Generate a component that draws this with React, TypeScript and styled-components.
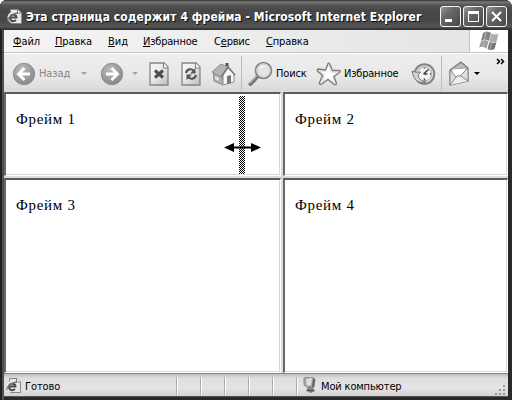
import React from "react";
import styled, { createGlobalStyle } from "styled-components";

const Global = createGlobalStyle`
  * { box-sizing: border-box; }
  body { margin: 0; background: #fff; overflow: hidden; }
`;

const Window = styled.div`
  width: 512px;
  height: 400px;
  display: flex;
  flex-direction: column;
  padding: 0 4px 4px;
  background: #292929;
  border-radius: 7px 7px 0 0;
  overflow: hidden;
  font-family: "DejaVu Sans Condensed", "DejaVu Sans", sans-serif;
  font-stretch: condensed;
  font-size: 11px;
  color: #000;
  box-shadow: inset 2px 0 #202020, inset 4px 0 #505050;
`;

const TitleBar = styled.header`
  height: 30px;
  flex: none;
  margin: 0 -4px;
  padding: 3px 5px 0 7px;
  display: flex;
  align-items: center;
  background: linear-gradient(#333 0, #777 2px, #555 5px, #484848 10px, #464646 20px, #555 27px, #333 29px);
`;

const Title = styled.h1<{ $spacing: number }>`
  margin: 0 0 0 4px;
  flex: 1;
  font-size: 12px;
  line-height: 20px;
  font-weight: 700;
  color: #fff;
  text-shadow: 1px 1px #111;
  white-space: nowrap;
  letter-spacing: ${(p) => p.$spacing}px;
`;

const WindowButtons = styled.div`
  display: flex;
  gap: 2px;
`;

const WindowButton = styled.button`
  width: 21px;
  height: 21px;
  padding: 0;
  border: 1px solid #f4f4f4;
  border-radius: 3px;
  background: linear-gradient(135deg, #999, #686868 35%, #484848);
  svg { display: block; }
`;

const MenuBar = styled.nav`
  height: 23px;
  flex: none;
  display: flex;
  background: linear-gradient(90deg, #f4f4f4, #e4e4e4);
  border-bottom: 1px solid #c4c4c4;
  padding-left: 9px;
`;

const MenuItem = styled.span<{ $width: number; $spacing?: number }>`
  width: ${(p) => p.$width}px;
  line-height: 23px;
  white-space: nowrap;
  letter-spacing: ${(p) => p.$spacing ?? 0}px;
  u { text-underline-offset: 1px; text-decoration-skip-ink: none; }
`;

const Brand = styled.div`
  width: 39px;
  height: 22px;
  margin-left: auto;
  background: #fff;
  border-left: 1px solid #c4c4c4;
`;

const Toolbar = styled.div`
  height: 39px;
  flex: none;
  display: flex;
  align-items: center;
  padding: 1px 3px 0 8px;
  border-top: 1px solid #fff;
  background: linear-gradient(#eee, #e8e8e8 60%, #d8d8d8);
`;

const Tool = styled.div<{ $width: number; $gap?: number; $muted?: boolean }>`
  width: ${(p) => p.$width}px;
  flex: none;
  display: flex;
  align-items: center;
  gap: ${(p) => p.$gap ?? 0}px;
  white-space: nowrap;
  color: ${(p) => (p.$muted ? "#858585" : "#000")};
  svg { flex: none; }
`;

const ToolLabel = styled.span<{ $width: number; $spacing?: number }>`
  width: ${(p) => p.$width}px;
  letter-spacing: ${(p) => p.$spacing ?? 0}px;
`;

const Caret = styled.i<{ $strong?: boolean }>`
  border: 3px solid transparent;
  border-bottom: 0;
  border-top-color: ${(p) => (p.$strong ? "#000" : "#a4a4a4")};
`;

const Separator = styled.i`
  width: 1px;
  height: 35px;
  flex: none;
  margin-right: 6px;
  background: #bdbdbd;
`;

const Overflow = styled.div`
  margin-left: auto;
  align-self: flex-start;
  padding-top: 3px;
  svg { display: block; }
`;

const Frameset = styled.main`
  height: 282px;
  flex: none;
  display: grid;
  grid-template-columns: 277px 227px;
  grid-template-rows: 85px 197px;
  margin-top: -1px;
  background: #dcdcdc;
`;

const Frame = styled.section<{ $right?: boolean; $bottom?: boolean }>`
  position: relative;
  margin: ${(p) => (p.$bottom ? 2 : 1)}px 0 0 ${(p) => (p.$right ? 2 : 0)}px;
  border-style: solid;
  border-width: 2px 1px 1px 2px;
  border-color: #5a5a5a #fff #fff #666;
  background: #fff;
  box-shadow: inset -1px -1px #d8d8d8;
  padding: 14px 0 0 10px;
  font: 15px/23px "Liberation Serif", serif;
`;

const FrameText = styled.p`
  margin: 0;
  letter-spacing: 0.7px;
`;

const DragGuide = styled.div`
  position: absolute;
  left: 233px;
  top: 2px;
  width: 6px;
  height: 78px;
  background: repeating-conic-gradient(#000 0 25%, #fff 0 50%) 0 0 / 2px 2px;
`;

const ResizeCursor = styled.svg`
  position: absolute;
  left: 218px;
  top: 48px;
`;

const StatusBar = styled.footer`
  height: 23px;
  flex: none;
  display: flex;
  align-items: center;
  padding: 1px 0 0 2px;
  border-top: 1px solid #888;
  background: linear-gradient(#bbb, #dedede 4px, #e4e4e4 14px, #d2d2d2);
  box-shadow: 0 1px #555;
`;

const StatusText = styled.span<{ $width: number; $spacing?: number }>`
  width: ${(p) => p.$width}px;
  margin-left: 4px;
  padding-top: 2px;
  white-space: nowrap;
  letter-spacing: ${(p) => p.$spacing ?? 0}px;
`;

const StatusPane = styled.i<{ $narrow?: boolean }>`
  width: ${(p) => (p.$narrow ? 7 : 24)}px;
  height: 18px;
  flex: none;
  border-left: 1px solid #aaa;
  box-shadow: inset 1px 0 #fff;
`;

const Grip = styled.svg`
  margin: auto 2px 0 auto;
  flex: none;
`;

const PageIcon = () => (
  <svg width="15" height="16" viewBox="0 0 15 16">
    <path d="M3.500 1.500V.5h7l4 3.500v10.500h-10z" fill="#e9e9e9" stroke="#858585" />
    <path d="M10.500.5v3.500h4" fill="#fff" stroke="#777" />
    <circle cx="6" cy="8.500" r="5.500" fill="#eee" />
    <path d="M9 11c-2 2-6 1.500-6-2.200C3 5 9.500 4.500 9.500 8.500H4" fill="none" stroke="#4c4c4c" strokeWidth="2" />
    <path d="M1 12C0 9 6 4 11 4" fill="none" stroke="#777" strokeWidth="1.300" />
  </svg>
);

const ArrowIcon = ({ flip }: { flip?: boolean }) => (
  <svg width="24" height="24" viewBox="0 0 24 24">
    <defs>
      <radialGradient id="disc" cx=".4" cy=".3" r=".75">
        <stop stopColor="#bcbcbc" /><stop offset="1" stopColor="#858585" />
      </radialGradient>
    </defs>
    <circle cx="12" cy="12" r="10.700" fill="url(#disc)" stroke="#8d8d8d" />
    <path transform={flip ? "translate(24 0) scale(-1 1)" : undefined}
      d="M12.500 6 6.500 12l6 6M7 12h11" fill="none" stroke="#fff" strokeWidth="2.900" />
  </svg>
);

const SheetIcon = ({ refresh }: { refresh?: boolean }) => (
  <svg width="20" height="24" viewBox="0 0 20 24">
    <defs>
      <linearGradient id="sheet" x2="1" y2="1">
        <stop stopColor="#f8f8f8" /><stop offset=".5" stopColor="#e8e8e8" /><stop offset="1" stopColor="#bbb" />
      </linearGradient>
    </defs>
    <path d="M1 1h14l4 4v18H1z" fill="url(#sheet)" stroke="#858585" strokeWidth="1.300" />
    <path d="M14.500 1v5H19" fill="#fff" stroke="#777" />
    {refresh ? (
      <g fill="none" stroke="#555" strokeWidth="2.200">
        <path d="M5 11c1-4 5-5 8-2M15 13c-1 4-5 5-8 2" />
        <path d="M14.500 6v5.500H9zM5.500 18v-5.500H11z" fill="#555" stroke="none" />
      </g>
    ) : <path d="m6 8.500 8 7m0-7-8 7" stroke="#4c4c4c" strokeWidth="3" />}
  </svg>
);

const HomeIcon = () => (
  <svg width="25" height="26" viewBox="0 0 25 26">
    <path d="M14.500 2h3v8h-3z" fill="#555" />
    <path d="M2.500 12 10 7l3 16-1 1-9-4z" fill="#adadad" stroke="#888" />
    <path d="m12 14 5-7 6 6v8l-11 3z" fill="#f7f7f7" stroke="#888" />
    <path d="m1 11 9-8 7 3-7 10z" fill="#b5b5b5" stroke="#8d8d8d" />
    <path d="m10 16 7-10 7 8" fill="none" stroke="#777" strokeWidth="1.500" />
    <path d="m16 15 4-1v8l-4 1z" fill="#777" />
    <path d="m4 15 4 2v3l-4-2z" fill="#e4e4e4" />
  </svg>
);

const SearchIcon = () => (
  <svg width="25" height="26" viewBox="0 0 25 26">
    <path d="m2.500 23 7.500-8" stroke="#737373" strokeWidth="4" strokeLinecap="round" />
    <path d="m2 22 7-8" stroke="#bbb" strokeWidth="1.500" />
    <circle cx="15.500" cy="9.500" r="8" fill="#ededed" stroke="#808080" strokeWidth="1.600" />
    <circle cx="15.500" cy="9.500" r="6.300" fill="#e4e4e4" stroke="#ccc" />
    <path d="M11 9c1-4 4-5 7-4-4 1-5 2-7 4z" fill="#fff" />
  </svg>
);

const StarIcon = () => (
  <svg width="26" height="26" viewBox="0 0 26 26">
    <path d="M12 2.500q1-1 1.700.5l2.800 6.500h7q1.500.5 0 2L18 15.500l2.500 7q-.5 2-2.500 1l-6-5-7 5q-2 0-1.500-2l3-7L1.500 10q-1-1.500 1-2l7 1z" fill="#e4e4e4" stroke="#7c7c7c" strokeWidth="1.300" strokeLinejoin="round" />
    <path d="m12.500 5 1.500 6.500 6 .5-4.500 3.500 2 5-5.500-4-4 3 1-6-4-3 5 .5z" fill="#fff" />
  </svg>
);

const HistoryIcon = () => (
  <svg width="25" height="24" viewBox="0 0 25 24">
    <circle cx="13.500" cy="12" r="9.800" fill="#ddd" stroke="#858585" strokeWidth="2" />
    <circle cx="13.500" cy="12" r="7" fill="#f4f4f4" stroke="#aaa" />
    <path d="m12.500 12 5-4.500m-5 4.500h4M13.500 5.500v1m0 10v2M20 12h-1" stroke="#444" strokeWidth="1.600" />
    <path d="M1 9c4 2 7 1 9 1l-3 3c1 4 3 6 8 7-7 2-12-1-14-11z" fill="#d4d4d4" stroke="#777" />
  </svg>
);

const MailIcon = () => (
  <svg width="22" height="25" viewBox="0 0 22 25">
    <path d="m2 9 11-8 7 6v13L2 24z" fill="#bbb" stroke="#777" strokeWidth="1.200" />
    <path d="m4 8 14-1v10L4 18z" fill="#fff" stroke="#aaa" />
    <path d="m2 9 6 7 4-1 8-8v13L2 24z" fill="#dedede" stroke="#888" />
    <path d="m2 24 7-9 4 0 7 5" fill="#eee" stroke="#858585" />
  </svg>
);

const FlagIcon = () => (
  <svg width="38" height="22" viewBox="0 0 38 22">
    <path d="M13 3q4-3 8 0l-2 8q-4-3-8 0z" fill="#858585" />
    <path d="M21.500 3.500q3.500 2 7 0l-2 8q-3.500 2-7 0z" fill="#aaa" />
    <path d="M11 11.500q4-3 7.500 0l-2 7q-4-3-7.500-1z" fill="#a0a0a0" />
    <path d="M19.500 12q3.500 2 7 0l-2 7q-3.500 2-7 0z" fill="#777" />
    <path d="m16 2-3 15m11-12-4 14" stroke="#b5b5b5" />
  </svg>
);

const ComputerIcon = () => (
  <svg width="14" height="17" viewBox="0 0 14 17">
    <path d="m1 1 9-1 2 2-1 8H4L1 8z" fill="#a9a9a9" stroke="#888" />
    <path d="m3 2 6-1-1 7-4 1z" fill="#dedede" />
    <path d="M5 10h5l2 4-4 2-5-2z" fill="#858585" />
    <path d="M10 2h2l-1 8h-2z" fill="#666" />
    <path d="m4 13 5 1 2-1" stroke="#444" fill="none" />
  </svg>
);

export default function App() {
  return (
    <>
      <Global />
      <Window>
        <TitleBar>
          <PageIcon />
          <Title $spacing={0.07}>Эта страница содержит 4 фрейма - Microsoft Internet Explorer</Title>
          <WindowButtons>
            <WindowButton aria-label="Свернуть"><svg width="19" height="19"><path d="M4 12h7v3H4z" fill="#fff" /></svg></WindowButton>
            <WindowButton aria-label="Развернуть"><svg width="19" height="19"><path d="M4.500 5.500h10v9h-10z" fill="none" stroke="#fff" /><path d="M4 4h11v3H4z" fill="#fff" /></svg></WindowButton>
            <WindowButton aria-label="Закрыть"><svg width="19" height="19"><path d="m5 5 9 9m0-9-9 9" stroke="#fff" strokeWidth="2" /></svg></WindowButton>
          </WindowButtons>
        </TitleBar>
        <MenuBar>
          <MenuItem $width={42} $spacing={-0.1}><u>Ф</u>айл</MenuItem>
          <MenuItem $width={53} $spacing={-0.1}><u>П</u>равка</MenuItem>
          <MenuItem $width={35}><u>В</u>ид</MenuItem>
          <MenuItem $width={71} $spacing={-0.2}><u>И</u>збранное</MenuItem>
          <MenuItem $width={52} $spacing={-0.2}>С<u>е</u>рвис</MenuItem>
          <MenuItem $width={44} $spacing={-0.15}><u>С</u>правка</MenuItem>
          <Brand><FlagIcon /></Brand>
        </MenuBar>
        <Toolbar>
          <Tool $width={88} $gap={3} $muted><ArrowIcon /><ToolLabel $width={39} $spacing={-0.1}>Назад</ToolLabel><Caret /></Tool>
          <Tool $width={49} $gap={8}><ArrowIcon flip /><Caret /></Tool>
          <Tool $width={32}><SheetIcon /></Tool>
          <Tool $width={30}><SheetIcon refresh /></Tool>
          <Tool $width={30}><HomeIcon /></Tool>
          <Separator />
          <Tool $width={68} $gap={3}><SearchIcon /><ToolLabel $width={38} $spacing={-0.15}>Поиск</ToolLabel></Tool>
          <Tool $width={95} $gap={2}><StarIcon /><ToolLabel $width={58} $spacing={-0.2}>Избранное</ToolLabel></Tool>
          <Tool $width={30}><HistoryIcon /></Tool>
          <Separator />
          <Tool $width={34} $gap={4}><MailIcon /><Caret $strong /></Tool>
          <Overflow><svg width="9" height="7"><path d="m1 1 2.500 2.500L1 6m4-5 2.500 2.500L5 6" fill="none" stroke="#000" strokeWidth="1.500" /></svg></Overflow>
        </Toolbar>
        <Frameset>
          <Frame>
            <FrameText>Фрейм 1</FrameText>
            <DragGuide />
            <ResizeCursor width="38" height="11"><path d="M0 5.500 10 1v3.500h17V1l10 4.500L27 10V6.500H10V10z" fill="#000" /></ResizeCursor>
          </Frame>
          <Frame $right><FrameText>Фрейм 2</FrameText></Frame>
          <Frame $bottom><FrameText>Фрейм 3</FrameText></Frame>
          <Frame $right $bottom><FrameText>Фрейм 4</FrameText></Frame>
        </Frameset>
        <StatusBar>
          <PageIcon />
          <StatusText $width={151} $spacing={-0.1}>Готово</StatusText>
          <StatusPane /><StatusPane /><StatusPane /><StatusPane /><StatusPane />
          <StatusPane $narrow />
          <ComputerIcon />
          <StatusText $width={90} $spacing={-0.15}>Мой компьютер</StatusText>
          <Grip width="12" height="12"><path d="M9 1h2v2H9zM5 5h2v2H5zm4 0h2v2H9zM1 9h2v2H1zm4 0h2v2H5zm4 0h2v2H9z" fill="#999" /></Grip>
        </StatusBar>
      </Window>
    </>
  );
}
